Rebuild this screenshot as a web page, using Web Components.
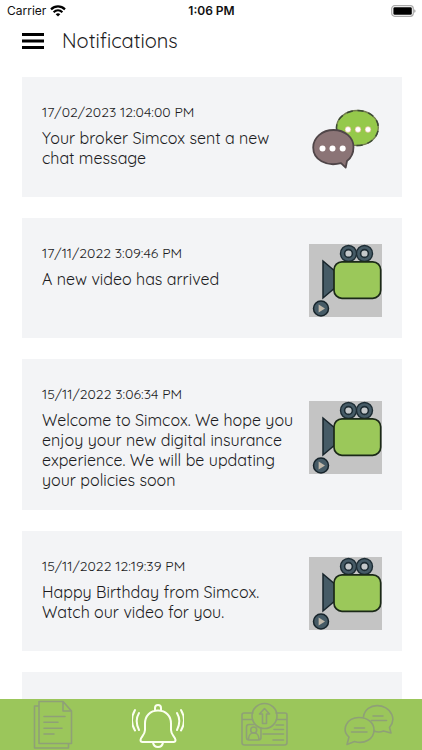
<!DOCTYPE html>
<html lang="en">
<head>
<meta charset="utf-8">
<meta name="viewport" content="width=device-width, initial-scale=1">
<title>Notifications</title>
<style>
  html, body { margin: 0; height: 100%; }
  body { background: #fff; color: #1c1c1e; font-family: Quicksand, Lato, sans-serif; }
</style>
</head>
<body>
<notifications-app>
  <notification-card kind="chat" time="17/02/2023 12:04:00 PM">Your broker Simcox sent a new chat message</notification-card>
  <notification-card kind="video" time="17/11/2022 3:09:46 PM">A new video has arrived</notification-card>
  <notification-card kind="video" time="15/11/2022 3:06:34 PM">Welcome to Simcox. We hope you enjoy your new digital insurance experience. We will be updating your policies soon</notification-card>
  <notification-card kind="video" time="15/11/2022 12:19:39 PM">Happy Birthday from Simcox. Watch our video for you.</notification-card>
  <notification-card></notification-card>
</notifications-app>
<script>
const define = (name, html, setup) => {
  const template = document.createElement('template');
  template.innerHTML = html;
  customElements.define(name, class extends HTMLElement {
    connectedCallback() {
      if (this.shadowRoot) return;
      this.attachShadow({ mode: 'open' }).append(template.content.cloneNode(true));
      if (setup) setup(this, this.shadowRoot);
    }
  });
};

define('status-bar', `
<style>
  :host { display: grid; grid-template-columns: 1fr auto 1fr; align-items: center; height: 22px; padding: 0 6px 0 7px; font: 12px/16px Inter, sans-serif; color: #111; }
  .left { display: flex; align-items: center; gap: 4px; }
  .time { font-weight: 600; }
  .battery { justify-self: end; }
  svg { display: block; }
</style>
<span class="left"><span>Carrier</span>
  <svg width="16" height="12" viewBox="0 0 16 12" fill="none" stroke="#000" stroke-width="2.2" aria-hidden="true"><path d="M1 4.4C5 .4 11 .4 15 4.4"/><path d="M3.6 7.2c2.6-2.4 6.2-2.4 8.8 0"/><path d="M8 11.5 5.7 9.2c1.3-1.2 3.3-1.2 4.6 0z" fill="#000" stroke="none"/></svg>
</span>
<span class="time">1:06 PM</span>
<svg class="battery" width="25" height="12" viewBox="0 0 25 12" aria-hidden="true"><rect x=".7" y=".7" width="21.6" height="10.6" rx="3" fill="#fff" stroke="#aaa" stroke-width="1.2"/><rect x="2.4" y="2.3" width="18.4" height="7.4" rx="1.3"/><path d="M23.4 4.2c1.4.5 1.4 3.1 0 3.6z" fill="#888"/></svg>`);

define('app-header', `
<style>
  :host { display: flex; align-items: center; gap: 18px; height: 38px; padding: 0 22px; }
  button { border: 0; padding: 0; background: none; color: #000; cursor: pointer; }
  svg { display: block; }
  h1 { margin: 0; font-size: 20px; line-height: 28px; font-weight: 400; color: #1c1c1e; }
</style>
<button type="button" aria-label="Menu"><svg width="22" height="16" viewBox="0 0 22 16"><path d="M0 1.5h22M0 8h22M0 14.5h22" stroke="currentColor" stroke-width="2.8"/></svg></button>
<h1><slot></slot></h1>`);

define('chat-picture', `
<style>:host { display: block; } svg { display: block; }</style>
<svg width="73" height="73" viewBox="0 0 73 73" aria-hidden="true">
  <path d="M48.500 7.500C60 7.500 69.300 15 69.300 24.500S61 42.500 48 42.500 27.500 34 27.500 24.500 37 7.500 48.500 7.500Z" fill="#95c94b" stroke="#737d4e" stroke-width="1.300"/>
  <path d="M48.500 7.500C60 7.500 69.300 15 69.300 24.500S61 42.500 48 42.500 27.500 34 27.500 24.500 37 7.500 48.500 7.500Z" fill="none" stroke="#3c4a35" stroke-width="1.500" stroke-dasharray="6 5"/>
  <g fill="#fff" stroke="#d8a878" stroke-width=".5"><circle cx="39" cy="26.500" r="2.900"/><circle cx="49" cy="26.500" r="2.900"/><circle cx="59" cy="26.500" r="2.900"/></g>
  <path d="M24.500 27C36 27 44.500 34.500 44.500 44c0 6-2.500 11-6.500 14l-1.300 6.700-4.700-4.500C17 64 4.200 56.500 4.200 44.500 4.200 35 13 27 24.500 27Z" fill="#8b7476" stroke="#4f4548" stroke-width="1.800" stroke-linejoin="round"/>
  <g fill="#fff"><circle cx="13.500" cy="45.500" r="3"/><circle cx="23.500" cy="45.500" r="3"/><circle cx="33.700" cy="45.500" r="3"/></g>
</svg>`);

define('video-picture', `
<style>:host { display: block; background: #c4c4c4; } svg { display: block; }</style>
<svg width="73" height="73" viewBox="0 0 73 73" aria-hidden="true">
  <path d="M14 17 27 28v15L14 54Z" fill="#465b66" stroke="#17242b" stroke-width="1.500"/>
  <g fill="#c4c8ca" stroke="#1d2c34"><circle cx="39.500" cy="9.500" r="5.900" stroke-width="5.600"/><circle cx="55.500" cy="9.500" r="5.900" stroke-width="5.600"/><circle cx="39.500" cy="9.500" r="6" stroke="#465b66" stroke-width="2.600" fill="none"/><circle cx="55.500" cy="9.500" r="6" stroke="#465b66" stroke-width="2.600" fill="none"/></g>
  <rect x="25" y="17.800" width="46.700" height="36.500" rx="8" fill="#9bc85a" stroke="#1b2918" stroke-width="1.700"/>
  <circle cx="12" cy="64.500" r="7.500" fill="#465b66" stroke="#17242b" stroke-width="1.500"/>
  <path d="m9.600 60.500 6.400 4-6.400 4Z" fill="#c0b8aa"/>
</svg>`);

define('notification-card', `
<style>
  :host { display: grid; grid-template-columns: minmax(0, 1fr) 73px; column-gap: 12px; box-sizing: border-box; flex: none; min-height: 120px; padding: 25px 20px 20px; background: #f3f4f6; }
  time { display: block; margin-bottom: 6px; font-size: 14px; line-height: 20px; }
  p { margin: 0; font-size: 16px; line-height: 20px; }
  .picture { align-self: center; }
</style>
<div><time></time><p><slot></slot></p></div><div class="picture"></div>`,
(host, root) => {
  root.querySelector('time').textContent = host.getAttribute('time') || '';
  const kind = host.getAttribute('kind');
  if (kind) root.querySelector('.picture').append(document.createElement(kind + '-picture'));
});

define('tab-bar', `
<style>
  :host { display: block; background: #9bc65b; }
  nav { display: grid; grid-template-columns: repeat(4, 1fr); height: 51px; overflow: hidden; }
  button { display: grid; place-items: center; border: 0; padding: 0; background: none; color: #8fa077; cursor: pointer; }
  button[aria-current] { color: #fbfff0; }
  svg { display: block; fill: none; stroke: currentColor; stroke-width: 1.6; stroke-linecap: round; stroke-linejoin: round; }
</style>
<nav aria-label="Main">
  <button type="button" aria-label="Documents"><svg width="52" height="51" viewBox="0 0 52 51"><path d="M12 2.500h24l8.500 9.500v32.500H12ZM36 2.500V12h8.500M12 7H7.500v42h34v-4.500M17 17.500h21M17 23.300h14M17 29.200h18M17 35h10"/></svg></button>
  <button type="button" aria-label="Notifications" aria-current="page"><svg width="52" height="51" viewBox="0 0 52 51"><path stroke-width="2" d="M23 11.500V9a3 3 0 0 1 6 0v2.500M26 11.500c-8 0-13 5.500-13 13v6.500c0 5-4.500 7-4.500 10 0 1.300.8 2 2 2h31c1.200 0 2-.7 2-2 0-3-4.500-5-4.500-10v-6.500c0-7.500-5-13-13-13M21 43.500c1 6 9 6 10 0M7 14c-3 5-3 11 0 17M3 11c-4 7-4 14 0 20.500M45 14c3 5 3 11 0 17M49 11c4 7 4 14 0 20.500"/></svg></button>
  <button type="button" aria-label="Upload details"><svg width="52" height="51" viewBox="0 0 52 51"><circle cx="26.500" cy="17" r="12.500"/><path d="M26.500 9.500 21.500 15h3v9.500h4V15h3ZM15 14H6q-2 0-2 2v27.500q0 2.500 2.500 2.500h40q2.500 0 2.500-2.500V16q0-2-2-2h-9M4 20.500h10.500M38.500 20.500H49M25 35h20.500M36 30.500h9.500M38 26h7.500M35 41h10.500"/><path d="M16 25.500h-5q-2.500 0-2.500 2.500v10.500q0 2.500 2.500 2.500h9.500q2.500 0 2.500-2.500V29M10.500 40.500c0-9 10.500-9 10.500 0"/><circle cx="15.700" cy="31" r="3"/></svg></button>
  <button type="button" aria-label="Chat"><svg width="52" height="51" viewBox="0 0 52 51"><path d="M20.500 17.500C23 3 44 3.500 49 16c2 5 .5 9-2.500 12.500l1.500 5.500-7.500-2c-3 1.200-6.500 1.200-9.500 0M16 18.500c9 0 15 5.500 15 12.500 0 9-9.500 14.500-19.500 11.500L4 45.500 6 38C-2 31 3.500 18.500 16 18.500ZM30 17h10M28.500 21.500h15M11.500 29h10M8.500 33h15.500"/></svg></button>
</nav>`);

define('notifications-app', `
<style>
  :host { display: flex; flex-direction: column; height: 100vh; }
  main { flex: 1; min-height: 0; overflow: hidden; display: flex; flex-direction: column; gap: 21px; padding: 17px 20px 0 22px; }
</style>
<status-bar></status-bar>
<app-header>Notifications</app-header>
<main><slot></slot></main>
<tab-bar></tab-bar>`);
</script>
</body>
</html>
